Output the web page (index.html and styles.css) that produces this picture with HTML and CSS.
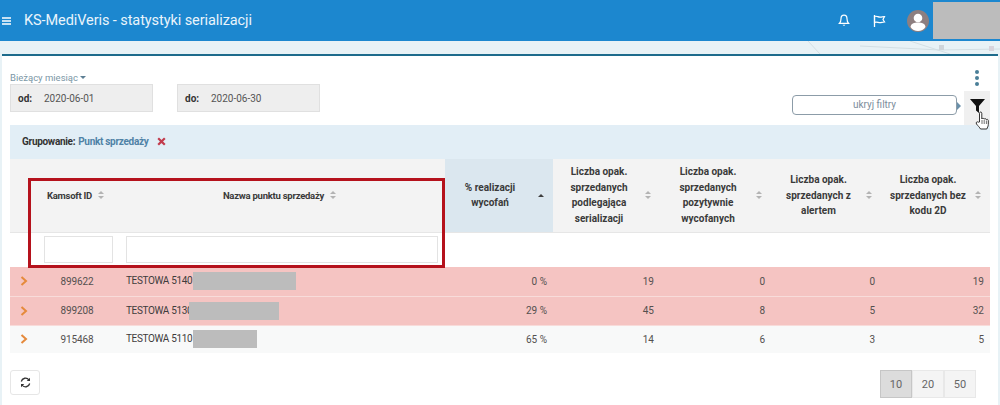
FILE: index.html
```html
<!DOCTYPE html>
<html lang="pl">
<head>
<meta charset="utf-8">
<title>KS-MediVeris - statystyki serializacji</title>
<link rel="stylesheet" href="styles.css">
</head>
<body>
<header class="topbar">
  <svg class="burger" width="9" height="8" viewBox="0 0 9 8"><path d="M0 1h9M0 4h9M0 7h9" stroke="#fff" stroke-width="1.4"/></svg>
  <h1 class="title">KS-MediVeris - statystyki serializacji</h1>
  <div class="top-icons">
    <svg class="ic-bell" width="12" height="13" viewBox="0 0 12 13"><path d="M6 1.2C3.8 1.2 3 3 3 4.8c0 2.4-.6 3.6-1.6 4.6h9.2C9.600 8.400 9 7.200 9 4.800 9 3 8.200 1.200 6 1.200z" fill="none" stroke="#fff" stroke-width="1.200"/><path d="M4.600 10.800a1.500 1.500 0 0 0 2.800 0z" fill="#fff"/></svg>
    <svg class="ic-flag" width="13" height="12" viewBox="0 0 13 12"><path d="M1.500 0v12" stroke="#fff" stroke-width="1.300"/><path d="M1.500 1.500c2.500-1 3.500 1 6 .6 1.500-.2 3-.6 4-.6l-1.500 3 1.500 2.500c-2 0-3 .6-4.500.6-2 0-3-1-5.500-.2z" fill="none" stroke="#fff" stroke-width="1.200"/></svg>
    <svg class="ic-user" width="22" height="22" viewBox="0 0 22 22"><circle cx="11" cy="11" r="11" fill="#8d7f80"/><circle cx="11" cy="8" r="4.300" fill="#fff"/><path d="M3.500 17c.5-3.500 3.500-4.500 7.500-4.500s7 1 7.500 4.500c-1.500 2.500-4.500 4-7.500 4s-6-1.500-7.500-4z" fill="#fff"/></svg>
    <div class="top-redact"></div>
  </div>
</header>
<div class="band">
  <svg class="band-lines" width="240" height="13" viewBox="0 0 240 13"><path d="M48 0l12 13M100 5l80 4 60-1M150 0l40 13" stroke="#d3dfe4" fill="none"/><rect x="179" y="4" width="5" height="5" fill="#cfd5da"/><rect x="229" y="5" width="5" height="5" fill="#d8d4dc"/></svg>
</div>
<main class="panel">
  <div class="filters">
    <div class="dates">
      <a class="period">Bieżący miesiąc<span class="caret"></span></a>
      <div class="date-row">
        <div class="date-box"><b>od:</b><span>2020-06-01</span></div>
        <div class="date-box"><b>do:</b><span>2020-06-30</span></div>
      </div>
    </div>
    <div class="filter-actions">
      <div class="kebab"><i></i><i></i><i></i></div>
      <div class="toggle-row">
        <div class="hide-btn">ukryj filtry</div>
        <span class="hide-arrow"></span>
        <div class="funnel-btn">
          <svg width="15" height="14" viewBox="0 0 15 14"><path d="M0 0h15L9 7v7L6 11.500V7z" fill="#111"/></svg>
        </div>
      </div>
      <svg class="cursor" width="15" height="20" viewBox="0 0 15 20"><path d="M4.500 11V2.200c0-1.600 2.300-1.600 2.300 0V8c.3-1 2.200-1 2.300.2.400-.9 2.100-.8 2.200.5.500-.7 2-.4 2 .9v3.900c0 2-1 3-1.500 4.500H5.500C4.800 16.500 3 15 1.500 13c-1-1.500.6-2.900 1.800-1.800z" fill="#fff" stroke="#333" stroke-width="1"/><path d="M7 9v4M9.200 9v4M11.400 9.500V13" stroke="#333" stroke-width=".7"/></svg>
    </div>
  </div>
  <div class="grouping">
    <b>Grupowanie:</b> <a>Punkt sprzedaży</a>
    <svg class="x" width="9" height="9" viewBox="0 0 9 9"><path d="M1.200 1.200l6.600 6.600M7.800 1.200L1.200 7.800" stroke="#c23b4c" stroke-width="2.200"/></svg>
  </div>
  <div class="table-wrap">
    <table class="grid">
      <colgroup>
        <col class="c-exp"><col class="c-id"><col class="c-name"><col class="c-pct"><col class="c-a"><col class="c-b"><col class="c-c"><col class="c-d">
      </colgroup>
      <thead>
        <tr class="head">
          <th></th>
          <th><div class="th tight"><span>Kamsoft ID</span><i class="sort"></i></div></th>
          <th><div class="th tight"><span>Nazwa punktu sprzedaży</span><i class="sort"></i></div></th>
          <th class="sorted"><div class="th"><span>% realizacji<br>wycofań</span><i class="sort-up"></i></div></th>
          <th><div class="th"><span>Liczba opak.<br>sprzedanych<br>podlegająca<br>serializacji</span><i class="sort"></i></div></th>
          <th><div class="th"><span>Liczba opak.<br>sprzedanych<br>pozytywnie<br>wycofanych</span><i class="sort"></i></div></th>
          <th><div class="th"><span>Liczba opak.<br>sprzedanych z<br>alertem</span><i class="sort"></i></div></th>
          <th><div class="th"><span>Liczba opak.<br>sprzedanych bez<br>kodu 2D</span><i class="sort"></i></div></th>
        </tr>
        <tr class="search">
          <td></td>
          <td><input class="inp" type="text" aria-label="Kamsoft ID"></td>
          <td><input class="inp" type="text" aria-label="Nazwa punktu sprzedaży"></td>
          <td colspan="5"></td>
        </tr>
      </thead>
      <tbody>
        <tr class="row alert">
          <td class="exp"><svg width="8" height="10" viewBox="0 0 8 10"><path d="M1.500 1l4.500 4-4.500 4" fill="none" stroke="#e58a3c" stroke-width="2"/></svg></td>
          <td class="id">899622</td>
          <td class="name">TESTOWA 5140<span class="redact r1"></span></td>
          <td class="n">0 %</td><td class="n">19</td><td class="n">0</td><td class="n">0</td><td class="n">19</td>
        </tr>
        <tr class="row alert">
          <td class="exp"><svg width="8" height="10" viewBox="0 0 8 10"><path d="M1.500 1l4.500 4-4.500 4" fill="none" stroke="#e58a3c" stroke-width="2"/></svg></td>
          <td class="id">899208</td>
          <td class="name">TESTOWA 5130<span class="redact r2"></span></td>
          <td class="n">29 %</td><td class="n">45</td><td class="n">8</td><td class="n">5</td><td class="n">32</td>
        </tr>
        <tr class="row plain">
          <td class="exp"><svg width="8" height="10" viewBox="0 0 8 10"><path d="M1.500 1l4.500 4-4.500 4" fill="none" stroke="#e58a3c" stroke-width="2"/></svg></td>
          <td class="id">915468</td>
          <td class="name">TESTOWA 5110<span class="redact r3"></span></td>
          <td class="n">65 %</td><td class="n">14</td><td class="n">6</td><td class="n">3</td><td class="n">5</td>
        </tr>
      </tbody>
    </table>
    <div class="highlight"></div>
  </div>
  <div class="foot">
    <button class="refresh" aria-label="odśwież"><svg width="11" height="11" viewBox="0 0 11 11"><path d="M1.300 4.500A4.300 4.300 0 0 1 9 3M9.700 6.500A4.300 4.300 0 0 1 2 8" fill="none" stroke="#333" stroke-width="1.300"/><path d="M10 .7v3.300H6.700zM1 10.300V7h3.300z" fill="#333"/></svg></button>
    <div class="pager"><span class="on">10</span><span>20</span><span>50</span></div>
  </div>
</main>
</body>
</html>
```
FILE: styles.css
```css
* { box-sizing: border-box; }
html, body { margin: 0; height: 405px; overflow: hidden; }
body { background: #e8f2f6; font-family: Roboto, "Liberation Sans", sans-serif; color: #444; font-size: 10px; }

.topbar { height: 41px; background: #1c87cf; display: flex; align-items: center; color: #fff; position: relative; }
.burger { margin-left: 2px; flex: none; }
.title { margin: 0 0 0 13px; font-size: 14.500px; font-weight: 400; letter-spacing: -.08px; color: #e9f4fb; white-space: nowrap; }
.top-icons { margin-left: auto; display: flex; align-items: center; height: 100%; }
.ic-bell { margin-right: 23px; }
.ic-flag { margin-right: 21px; }
.ic-user { margin-right: 4px; }
.top-redact { width: 67px; height: 37px; margin-top: -1px; background: #bcbcbc; }

.band { height: 13px; position: relative; overflow: hidden; }
.band-lines { position: absolute; right: 0; top: 0; }

.panel { margin: 0 2px; height: 351px; background: #fff; border-top: 2px solid #1d6b8c; padding: 0 8px; }

.filters { display: flex; justify-content: space-between; height: 69px; position: relative; }
.dates { padding-top: 15px; }
.period { display: flex; align-items: center; height: 13px; font-size: 9.500px; color: #7b97a6; }
.caret { margin-left: 2px; border: 3px solid transparent; border-top-color: #5d7f94; border-bottom: 0; }
.date-row { display: flex; gap: 24px; }
.date-box { width: 143px; height: 28px; background: #eee; border: 1px solid #e0e0e0; display: flex; align-items: center; padding-left: 7px; color: #555; font-size: 10px; }
.date-box b { width: 26px; color: #333; }

.filter-actions { display: flex; flex-direction: column; align-items: flex-end; position: relative; }
.kebab { display: flex; flex-direction: column; gap: 2px; margin: 14px 11px 0 0; }
.kebab i { width: 4px; height: 4px; border-radius: 50%; background: #4a7f98; }
.toggle-row { display: flex; align-items: flex-start; margin-top: 5px; }
.hide-btn { width: 165px; height: 20px; margin-top: 4px; border: 1px solid #8c9ca8; border-radius: 4px; text-align: center; line-height: 18px; color: #7d8d9c; font-size: 10px; }
.hide-arrow { margin: 10px 3px 0 0; border: 4px solid transparent; border-left-color: #6a90aa; border-right: 0; height: 0; width: 0; transform: translateY(1px); }
.funnel-btn { width: 26px; height: 34px; background: #f0f0f0; display: flex; justify-content: center; padding-top: 8px; }
.cursor { position: absolute; right: 0; top: 55px; }

.grouping { height: 34px; background: #e2eef6; padding: 0 0 2px 12px; display: flex; align-items: center; gap: 3px; font-size: 10px; letter-spacing: -.3px; color: #333; }
.grouping a { color: #4f82a6; font-weight: 700; }
.grouping .x { margin-left: 5px; }

.table-wrap { position: relative; }
.grid { width: 980px; border-collapse: collapse; table-layout: fixed; }
.c-exp { width: 27px; } .c-id { width: 83px; } .c-name { width: 325px; } .c-pct { width: 108px; }
.c-a { width: 107px; } .c-b { width: 111px; } .c-c { width: 110px; } .c-d { width: 109px; }

.head { height: 73px; background: #f3f3f3; border-bottom: 1px solid #e6e6e6; }
.head th { padding: 0; font-size: 10px; line-height: 15.500px; font-weight: 700; color: #3a3a3a; }
.head th.sorted { background: #dbe7ef; }
.th { display: flex; align-items: center; padding-right: 9px; }
.th span { flex: 1; text-align: center; }
.tight { justify-content: center; gap: 6px; padding-right: 6px; font-size: 9.500px; letter-spacing: -.25px; }
.tight span { flex: none; }
.sort { flex: none; width: 6px; height: 8px; position: relative; }
.sort::before, .sort::after { content: ""; position: absolute; left: 0; border: 3px solid transparent; }
.sort::before { top: 0; border-top: 0; border-bottom-color: #b3b3b3; }
.sort::after { bottom: 0; border-bottom: 0; border-top-color: #b3b3b3; }
.sort-up { flex: none; width: 0; height: 0; border: 3px solid transparent; border-top: 0; border-bottom-color: #3f3f3f; margin-left: 3px; }

.search { height: 35px; }
.search td { padding: 0; }
.inp { display: block; height: 27px; border: 1px solid #e3e3e3; background: #fff; }
.search td:nth-child(2) .inp { width: 69px; margin-left: 7px; }
.search td:nth-child(3) .inp { width: 312px; margin-left: 6px; }

.row { height: 29px; font-size: 10px; color: #54504f; }
.row td { padding: 0; white-space: nowrap; }
.alert { background: #f5c4c2; border-bottom: 1px solid #f8dcda; }
.plain { background: #f8f9f9; height: 28px; }
.exp { padding-left: 10px !important; }
.exp svg { display: block; }
.id { text-align: center; padding-right: 3px !important; letter-spacing: -.1px; }
.name { padding-left: 6px !important; color: #403c3c; letter-spacing: -.35px; }
.n { text-align: right; padding-right: 6px !important; }
.redact { display: inline-block; height: 18px; background: #bcbcbc; vertical-align: middle; }
.r1 { width: 103px; margin-left: 1px; }
.r2 { width: 90px; margin-left: -3px; }
.r3 { width: 64px; margin-left: 1px; }

.highlight { position: absolute; left: 18px; top: 19px; width: 417px; height: 90px; border: 3px solid #b5121c; pointer-events: none; }

.foot { display: flex; justify-content: space-between; align-items: flex-start; margin-top: 17px; }
.refresh { width: 30px; height: 25px; padding: 0; background: #fff; border: 1px solid #e6e6e6; border-radius: 3px; display: flex; align-items: center; justify-content: center; }
.pager { display: flex; margin-right: 14px; }
.pager span { width: 32px; height: 28px; background: #f4f4f4; border: 1px solid #e8e8e8; display: flex; align-items: center; justify-content: center; font-size: 11px; color: #666; }
.pager .on { background: #dcdcdc; border-color: #c6c6c6; }
```
